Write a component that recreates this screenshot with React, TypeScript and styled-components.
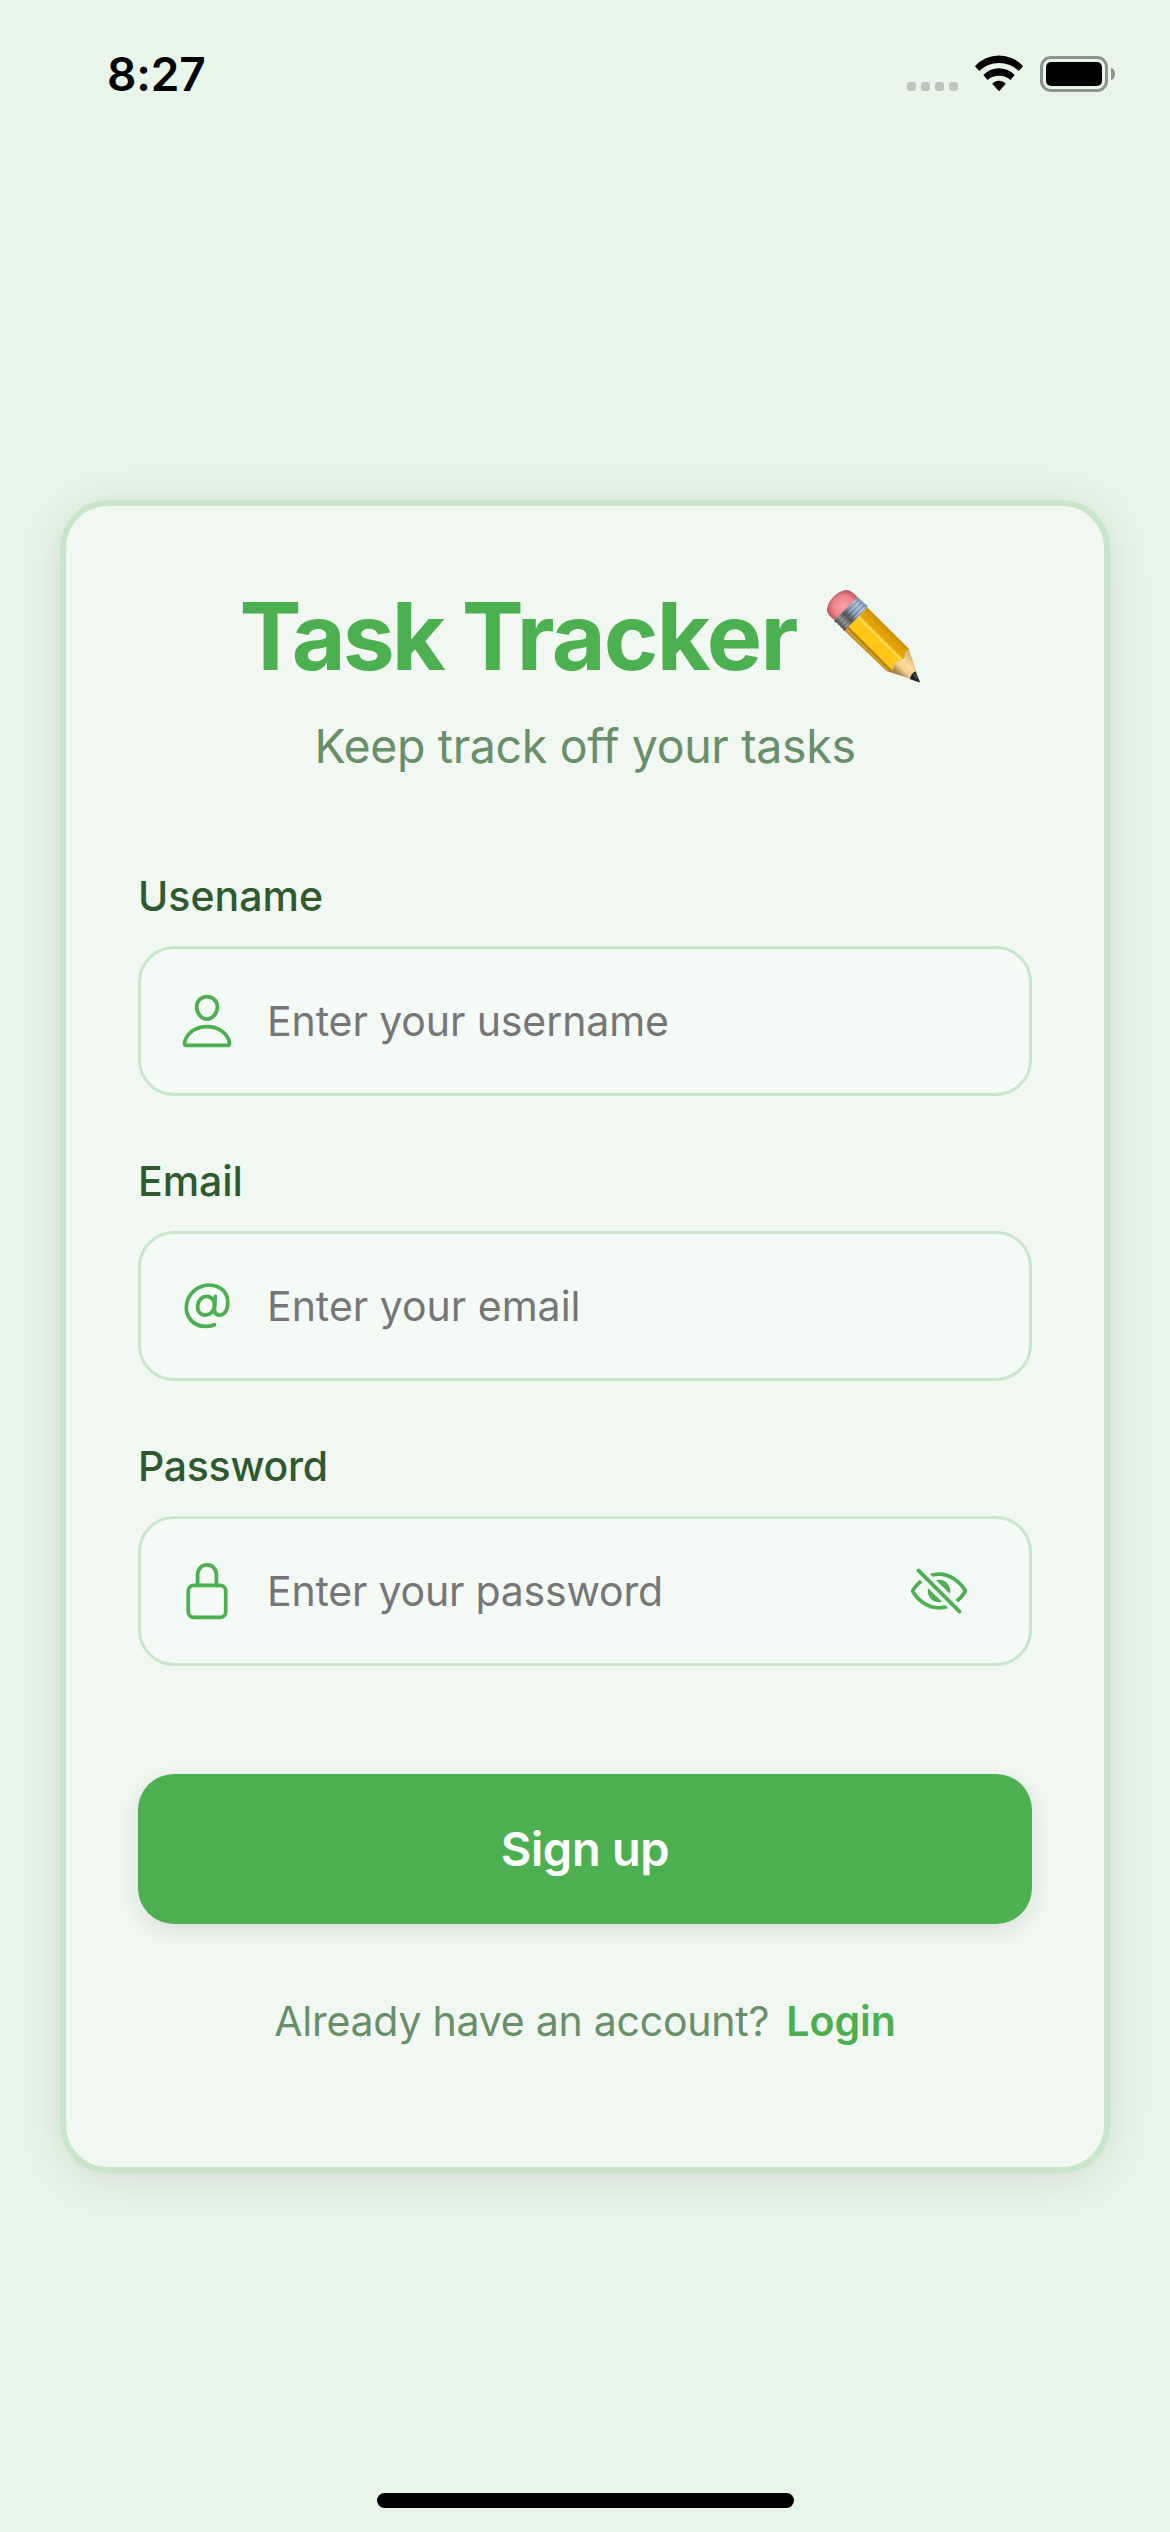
import React, { useState } from 'react';
import styled, { createGlobalStyle } from 'styled-components';
import {
  IoAtOutline,
  IoEyeOffOutline,
  IoEyeOutline,
  IoLockClosedOutline,
  IoPersonOutline,
} from 'react-icons/io5';

const colors = {
  background: '#e8f5e9',
  card: '#f1f8f2',
  border: '#c8e6c9',
  primary: '#4caf50',
  textDark: '#2e5a2e',
  textSoft: '#688f68',
  placeholder: '#767676',
  field: '#f4faf6',
};

const GlobalStyle = createGlobalStyle`
  *, *::before, *::after { box-sizing: border-box; }
  body {
    margin: 0;
    background: ${colors.background};
    font-family: Inter, Roboto, sans-serif;
    -webkit-font-smoothing: antialiased;
  }
`;

const Screen = styled.div`
  width: 1170px;
  height: 2532px;
  display: flex;
  flex-direction: column;
  background: ${colors.background};
  overflow: hidden;
`;

const StatusBar = styled.header`
  flex: none;
  height: 141px;
  display: flex;
  align-items: flex-start;
  justify-content: space-between;
  padding: 46px 55px 0 107px;
`;

const Clock = styled.time`
  font-size: 46px;
  line-height: 56px;
  font-weight: 600;
  letter-spacing: -0.16px;
  color: #000;
`;

const StatusIcons = styled.div`
  height: 46px;
  display: flex;
  align-items: flex-end;
`;

const SignalDots = styled.div`
  display: flex;
  gap: 5px;
  padding-bottom: 1px;
  margin-right: 16px;
`;

const Dot = styled.span`
  width: 9px;
  height: 9px;
  border-radius: 3px;
  background: #bac5bb;
`;

const WifiSvg = styled.svg`
  width: 50px;
  height: 37px;
  display: block;
  margin-right: 16px;
`;

const BatteryRow = styled.div`
  display: flex;
  align-items: center;
  gap: 3px;
`;

const BatteryShell = styled.div`
  width: 68px;
  height: 36px;
  padding: 3px;
  border: 3px solid #8c948d;
  border-radius: 11px;
`;

const BatteryLevel = styled.div`
  height: 100%;
  border-radius: 5px;
  background: #000;
`;

const BatteryTip = styled.div`
  width: 4px;
  height: 12px;
  border-radius: 0 4px 4px 0 / 0 6px 6px 0;
  background: #8c948d;
`;

const Main = styled.main`
  flex: 1;
  display: flex;
  flex-direction: column;
  padding: 359px 60px 0;
`;

const Card = styled.section`
  height: 1673px;
  display: flex;
  flex-direction: column;
  padding: 74px 72px 0;
  border: 6px solid ${colors.border};
  border-radius: 48px;
  background: ${colors.card};
  box-shadow: 0 6px 48px rgba(0, 0, 0, 0.1);
`;

const TitleRow = styled.div`
  display: flex;
  align-items: flex-start;
  justify-content: center;
  height: 112px;
  gap: 29px;
`;

const Title = styled.h1`
  margin: 0;
  font-size: 93px;
  line-height: 112px;
  font-weight: 700;
  white-space: nowrap;
  color: ${colors.primary};
`;

const Word = styled.span<{ $tracking: number }>`
  letter-spacing: ${(p) => p.$tracking}px;
`;

const PencilSvg = styled.svg`
  flex: none;
  width: 105px;
  height: 97px;
  margin-top: 8px;
`;

const Subtitle = styled.p`
  margin: 26px 0 0;
  font-size: 46.5px;
  line-height: 56px;
  letter-spacing: -0.355px;
  text-align: center;
  color: ${colors.textSoft};
`;

const Form = styled.form`
  display: flex;
  flex-direction: column;
  margin-top: 97px;
`;

const Fields = styled.div`
  display: flex;
  flex-direction: column;
  gap: 60px;
`;

const Field = styled.div`
  display: flex;
  flex-direction: column;
  gap: 25px;
`;

const Label = styled.label<{ $tracking: number }>`
  font-size: 41px;
  line-height: 50px;
  font-weight: 500;
  letter-spacing: ${(p) => p.$tracking}px;
  color: ${colors.textDark};
`;

const InputBox = styled.div`
  height: 150px;
  display: flex;
  align-items: center;
  padding: 0 36px;
  border: 3px solid ${colors.border};
  border-radius: 36px;
  background: ${colors.field};
  color: ${colors.primary};

  > svg {
    flex: none;
    width: 60px;
    height: 60px;
    margin-right: 30px;
  }
`;

const Input = styled.input<{ $tracking: number }>`
  flex: 1;
  min-width: 0;
  height: 50px;
  padding: 0;
  border: 0;
  outline: 0;
  background: transparent;
  font-family: inherit;
  font-size: 41px;
  line-height: 50px;
  letter-spacing: ${(p) => p.$tracking}px;
  color: ${colors.textDark};

  &::placeholder {
    color: ${colors.placeholder};
    opacity: 1;
  }
`;

const EyeButton = styled.button`
  display: flex;
  padding: 0 24px;
  border: 0;
  background: none;
  color: inherit;

  svg {
    width: 60px;
    height: 60px;
  }
`;

const SubmitButton = styled.button`
  height: 150px;
  margin-top: 108px;
  padding: 0 0 2px;
  border: 0;
  border-radius: 36px;
  background: ${colors.primary};
  box-shadow: 0 6px 24px rgba(0, 0, 0, 0.1);
  font-family: inherit;
  font-size: 47px;
  line-height: 57px;
  font-weight: 600;
  letter-spacing: -0.324px;
  color: #fff;
`;

const Footer = styled.div`
  display: flex;
  justify-content: center;
  gap: 17px;
  margin-top: 72px;
  font-size: 41px;
  line-height: 50px;
`;

const FooterText = styled.span`
  letter-spacing: -0.23px;
  color: ${colors.textSoft};
`;

const FooterLink = styled.a`
  font-weight: 600;
  color: ${colors.primary};
  text-decoration: none;
`;

const HomeArea = styled.div`
  flex: none;
  display: flex;
  justify-content: center;
  height: 39px;
`;

const HomeBar = styled.div`
  width: 417px;
  height: 15px;
  border-radius: 8px;
  background: #000;
`;

function Wifi() {
  return (
    <WifiSvg viewBox="0 0 50 37">
      <path d="M0.9 11.2A32.6 32.6 0 0 1 49.1 11.2L44.8 15.9A28.7 28.7 0 0 0 5.2 15.9Z" />
      <path d="M9.3 20A21.5 21.5 0 0 1 40.7 20L36.4 24.9A17.8 17.8 0 0 0 13.6 24.9Z" />
      <path d="M18.2 28.8A9 9 0 0 1 31.8 28.8L25 36.2Z" />
    </WifiSvg>
  );
}

function Pencil() {
  return (
    <PencilSvg viewBox="678 84 315 291" role="img" aria-label="pencil">
      <defs>
        <radialGradient id="eraser" cx="0.55" cy="0.55" r="0.6">
          <stop offset="0" stopColor="#ffa3ad" />
          <stop offset="0.6" stopColor="#ee8088" />
          <stop offset="1" stopColor="#a34c50" />
        </radialGradient>
        <linearGradient id="metal" gradientUnits="userSpaceOnUse" x1="793" y1="124" x2="718" y2="200">
          <stop offset="0" stopColor="#6f8ca8" />
          <stop offset="0.2" stopColor="#a9c1db" />
          <stop offset="0.42" stopColor="#8299b0" />
          <stop offset="0.62" stopColor="#55585c" />
          <stop offset="0.8" stopColor="#96928f" />
          <stop offset="1" stopColor="#3d3b3a" />
        </linearGradient>
        <linearGradient id="paint" gradientUnits="userSpaceOnUse" x1="870" y1="204" x2="798" y2="276">
          <stop offset="0" stopColor="#bf8500" />
          <stop offset="0.1" stopColor="#d89a03" />
          <stop offset="0.34" stopColor="#e5a808" />
          <stop offset="0.39" stopColor="#ffe060" />
          <stop offset="0.47" stopColor="#ffc61c" />
          <stop offset="0.8" stopColor="#ffc414" />
          <stop offset="0.84" stopColor="#9d7510" />
          <stop offset="0.91" stopColor="#dda42b" />
          <stop offset="1" stopColor="#a97a1c" />
        </linearGradient>
        <linearGradient id="wood" gradientUnits="userSpaceOnUse" x1="938" y1="298" x2="898" y2="340">
          <stop offset="0" stopColor="#e2bb7c" />
          <stop offset="0.35" stopColor="#fddc9e" />
          <stop offset="0.7" stopColor="#f4cd8b" />
          <stop offset="1" stopColor="#a68556" />
        </linearGradient>
      </defs>
      <path fill="url(#eraser)" d="M709 181C695 173 684 160 684 149C685 121 718 91 742 90C755 90 769 103 777 115Z" />
      <path fill="url(#paint)" d="M804 142L928 265Q931 269 931 276L880 336L862 333L734 210Z" />
      <path fill="url(#wood)" d="M930 267L953 337L934 356L864 334C872 331 880 332 884 327C887 320 882 313 888 306C896 301 907 306 914 299C920 291 915 282 919 275Z" />
      <path fill="#24272b" d="M950 334L962 364Q963 368 959 367L932 357C935 347 941 338 950 334Z" />
      <path fill="#6b7178" d="M949 339L956 357L944 347Z" opacity="0.6" />
      <path fill="url(#metal)" d="M775 111Q780 111 781 118Q788 119 790 125Q796 126 797 132Q805 134 806 141L736 213Q731 211 731 205Q724 203 723 197Q716 195 715 189Q707 188 705 182Z" />
      <g fill="none" strokeWidth="2.4" opacity="0.55">
        <path stroke="#343b44" d="M781 118L715 186M790 126L723 194M798 134L731 202" />
        <path stroke="#d4e2ef" d="M785 119L748 157M794 128L757 166M801 137L766 173" />
      </g>
    </PencilSvg>
  );
}

export default function App() {
  const [hidden, setHidden] = useState(true);

  return (
    <>
      <GlobalStyle />
      <Screen>
        <StatusBar>
          <Clock>8:27</Clock>
          <StatusIcons>
            <SignalDots>
              <Dot />
              <Dot />
              <Dot />
              <Dot />
            </SignalDots>
            <Wifi />
            <BatteryRow>
              <BatteryShell>
                <BatteryLevel />
              </BatteryShell>
              <BatteryTip />
            </BatteryRow>
          </StatusIcons>
        </StatusBar>

        <Main>
          <Card>
            <TitleRow>
              <Title>
                <Word $tracking={-3}>Task </Word>
                <Word $tracking={-1.8}>Tracker</Word>
              </Title>
              <Pencil />
            </TitleRow>
            <Subtitle>Keep track off your tasks</Subtitle>

            <Form onSubmit={(e) => e.preventDefault()}>
              <Fields>
                <Field>
                  <Label htmlFor="username" $tracking={0.02}>Usename</Label>
                  <InputBox>
                    <IoPersonOutline />
                    <Input id="username" placeholder="Enter your username" $tracking={-0.1} />
                  </InputBox>
                </Field>
                <Field>
                  <Label htmlFor="email" $tracking={-0.06}>Email</Label>
                  <InputBox>
                    <IoAtOutline />
                    <Input id="email" placeholder="Enter your email" $tracking={0} />
                  </InputBox>
                </Field>
                <Field>
                  <Label htmlFor="password" $tracking={-0.29}>Password</Label>
                  <InputBox>
                    <IoLockClosedOutline />
                    <Input
                      id="password"
                      type={hidden ? 'password' : 'text'}
                      placeholder="Enter your password"
                      $tracking={-0.21}
                    />
                    <EyeButton type="button" onClick={() => setHidden(!hidden)}>
                      {hidden ? <IoEyeOffOutline /> : <IoEyeOutline />}
                    </EyeButton>
                  </InputBox>
                </Field>
              </Fields>
              <SubmitButton type="submit">Sign up</SubmitButton>
            </Form>

            <Footer>
              <FooterText>Already have an account?</FooterText>
              <FooterLink>Login</FooterLink>
            </Footer>
          </Card>
        </Main>

        <HomeArea>
          <HomeBar />
        </HomeArea>
      </Screen>
    </>
  );
}
